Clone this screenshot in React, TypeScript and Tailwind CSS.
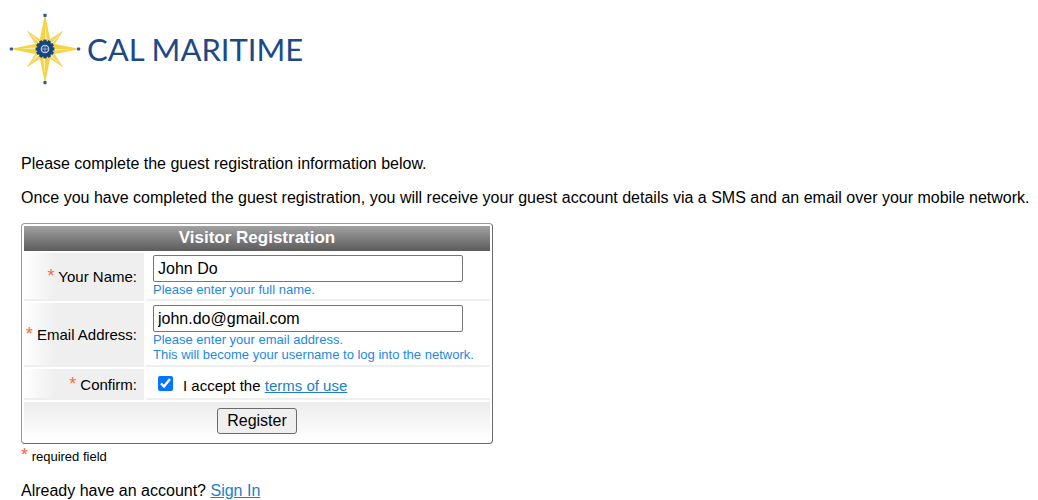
import type { ReactNode } from "react";

function CompassRose() {
  const teeth = [0, 30, 60, 90, 120, 150, 180, 210, 240, 270, 300, 330];
  return (
    <svg viewBox="0 0 72 72" className="size-18 shrink-0" aria-hidden="true">
      {[45, 135, 225, 315].map((a) => (
        <g key={a} transform={`rotate(${a} 36 36)`}>
          <path d="M36 10 L41.5 36 H30.5 Z" fill="#f3d35a" />
          <path d="M36 14 L38 36 H36 Z" fill="#fdf6d4" />
        </g>
      ))}
      {[0, 90, 180, 270].map((a) => (
        <g key={a} transform={`rotate(${a} 36 36)`}>
          <path d="M36 1 L43 36 H29 Z" fill="#f5d344" />
          <path d="M36 10 L39 36 H36 Z" fill="#fbeeb0" />
          <rect x="34.4" y="0.8" width="3.2" height="3.2" rx="0.8" fill="#2f5c93" />
        </g>
      ))}
      {teeth.map((a) => (
        <rect key={a} x="34.4" y="26.6" width="3.2" height="4" fill="#164481" transform={`rotate(${a} 36 36)`} />
      ))}
      <circle cx="36" cy="36" r="8" fill="#164481" />
      <circle cx="36" cy="36" r="3.7" fill="none" stroke="#c3d2e4" strokeWidth="1.3" />
      <path d="M36 32 V40 M32 36 H40" stroke="#8facd0" strokeWidth="1" />
    </svg>
  );
}

function Star() {
  return <span className="text-lg leading-4 text-[#ff6a3c]">*</span>;
}

function LabelCell({ htmlFor, children }: { htmlFor: string; children: ReactNode }) {
  return (
    <th
      scope="row"
      className="border-b-2 border-[#efefef] bg-linear-to-r from-white to-[#efefef] to-25% pt-0.5 pr-[7px] pb-0 pl-0 text-right align-middle text-[15px] leading-5 font-normal whitespace-nowrap"
    >
      <label htmlFor={htmlFor}>
        <Star /> {children}
      </label>
    </th>
  );
}

const field =
  "block h-[27px] w-[310px] max-w-full rounded-xs border border-[#767676] bg-white px-1 text-base leading-5 text-black";
const hint = "text-[13px] leading-[15px] text-[#1e88e5]";
const link = "text-[#1b80c4] underline";

export default function App() {
  return (
    <div className="bg-white font-['Liberation_Sans',Arial,sans-serif] text-base leading-5 text-black">
      <header className="flex items-center gap-1.5 px-[9px] pt-[13px]">
        <CompassRose />
        <span className="font-[Lato,sans-serif] text-[31px] leading-10 whitespace-nowrap text-[#1c4a86]">CAL MARITIME</span>
      </header>

      <main className="pt-[69px] pl-[21px]">
        <p>Please complete the guest registration information below.</p>
        <p className="mt-3.5">
          Once you have completed the guest registration, you will receive your guest account details via a SMS and an
          email over your mobile network.
        </p>

        <form className="mt-[15px]" onSubmit={(e) => e.preventDefault()}>
          <table className="w-[472px] max-w-full table-fixed border-separate border-spacing-0.5 rounded border border-[#6a6a6a] border-t-[#999999] border-l-[#999999]">
            <colgroup>
              <col className="w-[120px]" />
              <col />
            </colgroup>
            <thead>
              <tr>
                <th
                  colSpan={2}
                  className="h-[25px] bg-linear-to-b from-[#a2a2a2] to-[#5c5c5c] px-0 pt-0 pb-0.5 text-[17px] leading-5 font-bold text-white"
                >
                  Visitor Registration
                </th>
              </tr>
            </thead>
            <tbody>
              <tr className="h-12">
                <LabelCell htmlFor="name">Your Name:</LabelCell>
                <td className="border-b-2 border-[#efefef] px-[7px] pt-0.5 pb-0.5 align-top">
                  <input id="name" type="text" defaultValue="John Do" className={field} />
                  <p className={hint}>Please enter your full name.</p>
                </td>
              </tr>
              <tr className="h-16">
                <LabelCell htmlFor="email">Email Address:</LabelCell>
                <td className="border-b-2 border-[#efefef] px-[7px] pt-0.5 pb-0.5 align-top">
                  <input id="email" type="email" defaultValue="john.do@gmail.com" className={field} />
                  <p className={hint}>
                    Please enter your email address.
                    <br />
                    This will become your username to log into the network.
                  </p>
                </td>
              </tr>
              <tr className="h-[31px]">
                <LabelCell htmlFor="confirm">Confirm:</LabelCell>
                <td className="border-b-2 border-[#efefef] px-[7px] pt-1 pb-0 align-middle">
                  <div className="flex items-baseline gap-2.5 pl-[5px] text-[15px]">
                    <input id="confirm" type="checkbox" defaultChecked className="size-[15px] accent-[#0075ff]" />
                    <span>
                      I accept the{" "}
                      <a href="#terms" className={link}>
                        terms of use
                      </a>
                    </span>
                  </div>
                </td>
              </tr>
            </tbody>
            <tfoot>
              <tr>
                <td colSpan={2} className="h-[39px] bg-linear-to-b from-[#ececec] to-white px-0 pt-0 pb-0.5 text-center">
                  <button
                    type="submit"
                    className="h-[26px] rounded-[3px] border border-[#6b6b6b] bg-[#efefef] px-[9px] text-base leading-5"
                  >
                    Register
                  </button>
                </td>
              </tr>
            </tfoot>
          </table>
        </form>

        <p className="mt-[3px] text-[13px] leading-5">
          <Star /> required field
        </p>
        <p className="mt-3.5">
          Already have an account?{" "}
          <a href="#sign-in" className={link}>
            Sign In
          </a>
        </p>
      </main>
    </div>
  );
}
